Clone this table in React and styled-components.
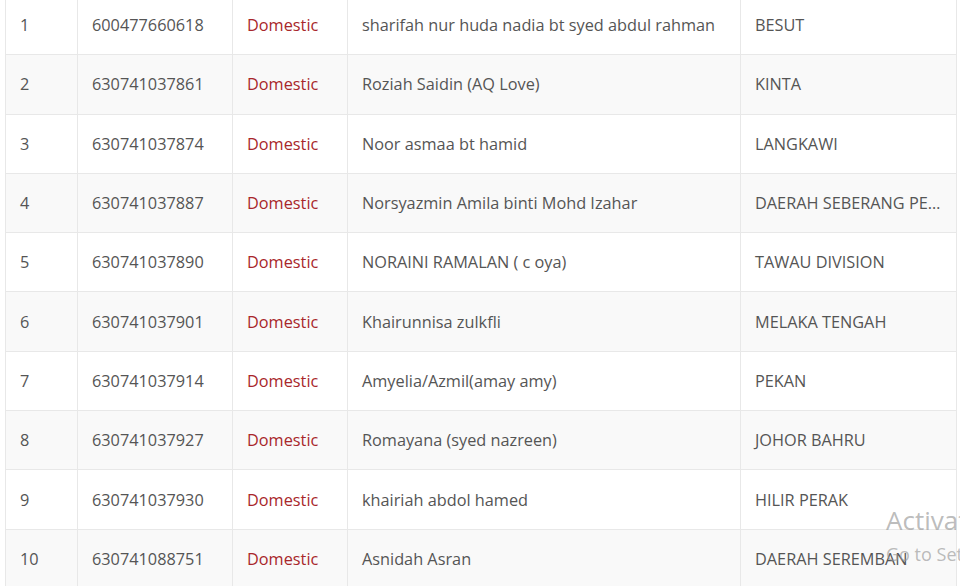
import React from 'react';
import styled, { createGlobalStyle } from 'styled-components';

const GlobalStyle = createGlobalStyle`
  html, body {
    margin: 0;
    padding: 0;
    background: #fff;
    overflow: hidden;
  }
  body {
    font-family: "Open Sans", "Noto Sans", sans-serif;
  }
`;

const Page = styled.div`
  position: relative;
  width: 960px;
  height: 586px;
  overflow: hidden;
`;

const Table = styled.table`
  margin: -5px 0 0 5px;
  width: 952px;
  border-collapse: collapse;
  table-layout: fixed;
  font-size: 16.3px;
  color: #555;
`;

const Row = styled.tr`
  height: 59.3px;
  background: ${p => (p.$striped ? '#f9f9f9' : '#fff')};
`;

const Cell = styled.td`
  border: 1px solid #e8e8e8;
  padding: 0 14px;
  white-space: nowrap;
  overflow: hidden;
  text-overflow: ellipsis;
  vertical-align: middle;
  color: ${p => (p.$accent ? '#a8272b' : 'inherit')};
`;

const Watermark = styled.div`
  position: absolute;
  left: 886px;
  top: 503px;
  color: rgba(150, 150, 150, 0.65);
  font-family: "Open Sans", sans-serif;
  white-space: nowrap;
  pointer-events: none;
`;

const WatermarkTitle = styled.div`
  font-size: 26px;
  line-height: 34px;
`;

const WatermarkSub = styled.div`
  font-size: 18px;
  line-height: 22px;
  margin-top: 6px;
`;

const rows = [
  ['1', '600477660618', 'sharifah nur huda nadia bt syed abdul rahman', 'BESUT'],
  ['2', '630741037861', 'Roziah Saidin (AQ Love)', 'KINTA'],
  ['3', '630741037874', 'Noor asmaa bt hamid', 'LANGKAWI'],
  ['4', '630741037887', 'Norsyazmin Amila binti Mohd Izahar', 'DAERAH SEBERANG PERAI UTARA'],
  ['5', '630741037890', 'NORAINI RAMALAN ( c oya)', 'TAWAU DIVISION'],
  ['6', '630741037901', 'Khairunnisa zulkfli', 'MELAKA TENGAH'],
  ['7', '630741037914', 'Amyelia/Azmil(amay amy)', 'PEKAN'],
  ['8', '630741037927', 'Romayana (syed nazreen)', 'JOHOR BAHRU'],
  ['9', '630741037930', 'khairiah abdol hamed', 'HILIR PERAK'],
  ['10', '630741088751', 'Asnidah Asran', 'DAERAH SEREMBAN'],
];

export default function App() {
  return (
    <Page>
      <GlobalStyle />
      <Table>
        <colgroup>
          <col style={{ width: 72 }} />
          <col style={{ width: 155 }} />
          <col style={{ width: 115 }} />
          <col style={{ width: 393 }} />
          <col style={{ width: 216 }} />
        </colgroup>
        <tbody>
          {rows.map(([no, phone, name, area], i) => (
            <Row key={no} $striped={i % 2 === 1}>
              <Cell>{no}</Cell>
              <Cell>{phone}</Cell>
              <Cell $accent>Domestic</Cell>
              <Cell>{name}</Cell>
              <Cell>{area}</Cell>
            </Row>
          ))}
        </tbody>
      </Table>
      <Watermark>
        <WatermarkTitle>Activate Windows</WatermarkTitle>
        <WatermarkSub>Go to Settings to activate Windows.</WatermarkSub>
      </Watermark>
    </Page>
  );
}
